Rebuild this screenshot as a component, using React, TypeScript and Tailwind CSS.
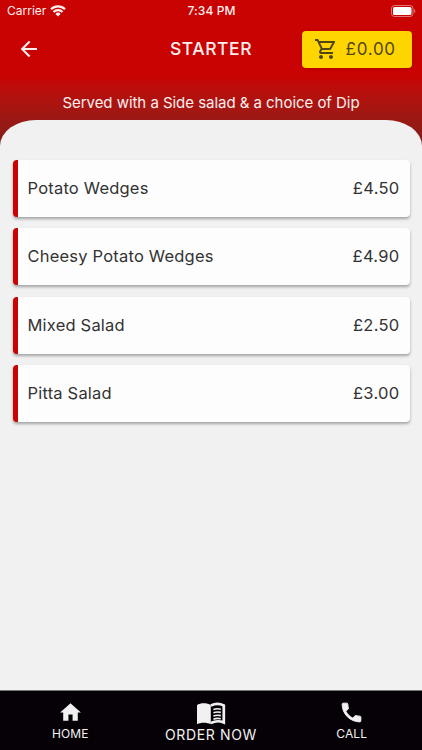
import React from 'react';
import { MdHome, MdOutlineShoppingCart } from 'react-icons/md';

const items = [
  { name: 'Potato Wedges', price: '£4.50' },
  { name: 'Cheesy Potato Wedges', price: '£4.90' },
  { name: 'Mixed Salad', price: '£2.50' },
  { name: 'Pitta Salad', price: '£3.00' },
];

function StatusBar() {
  return (
    <div className="h-5 grid grid-cols-3 items-center pt-0.5 pl-[7px] pr-1.5 text-xs">
      <div className="flex items-center gap-1">
        <span>Carrier</span>
        <svg width="16" height="12" viewBox="0 0 16 12" fill="none" stroke="currentColor" strokeWidth="2.2">
          <path d="M1 4.3a10 10 0 0 1 14 0" />
          <path d="M3.5 7.1a6.2 6.2 0 0 1 9 0" />
          <path d="M8 11.5 5.4 8.9a3.6 3.6 0 0 1 5.2 0Z" fill="currentColor" stroke="none" />
        </svg>
      </div>
      <span className="text-center font-medium tracking-[0.1px]">7:34 PM</span>
      <svg className="justify-self-end" width="25" height="12" viewBox="0 0 25 12">
        <rect x="0.5" y="0.5" width="21.5" height="11" rx="3" fill="none" stroke="#fff" strokeOpacity="0.45" />
        <rect x="2" y="2" width="18.5" height="8" rx="1.6" fill="#fff" />
        <path d="M23.2 4v4c1.5-.7 1.5-3.3 0-4Z" fill="#fff" fillOpacity="0.5" />
      </svg>
    </div>
  );
}

function BackIcon() {
  return (
    <svg className="ml-[9.5px]" width="18" height="18" viewBox="0 0 18 18" fill="none" stroke="currentColor" strokeWidth="2.1">
      <path d="M17 9H2.5M9.6 1.6 2.2 9l7.4 7.4" />
    </svg>
  );
}

function BookIcon() {
  return (
    <svg width="30" height="24" viewBox="0 0 30 24" fill="none" stroke="currentColor">
      <path d="M1 3C4.5.8 11 .8 14.8 3v19.2C11 20.2 4.5 20.2 1 22.2Z" fill="currentColor" stroke="none" />
      <path d="M14.9 3.4C18.5 1.8 24 1.6 27.8 3.5v17C24 18.9 18.5 19.2 14.9 21" strokeWidth="2.7" />
      <path d="M17.4 7.6c2.3-.9 5-1 7.4-.4M17.4 10.8c2.3-.9 5-1 7.4-.4M17.4 14c2.3-.9 5-1 7.4-.4M17.4 17.2c2.3-.9 5-1 7.4-.4" strokeWidth="1.6" />
    </svg>
  );
}

function PhoneIcon() {
  return (
    <svg width="25" height="25" viewBox="0 0 24 24" fill="currentColor" stroke="currentColor" strokeWidth="0.9">
      <path d="M6.62 10.79c1.44 2.83 3.76 5.14 6.59 6.59l2.2-2.2c.27-.27.67-.36 1.02-.24 1.12.37 2.33.57 3.57.57.55 0 1 .45 1 1V20c0 .55-.45 1-1 1-9.39 0-17-7.61-17-17 0-.55.45-1 1-1h3.5c.55 0 1 .45 1 1 0 1.25.2 2.45.57 3.57.11.35.03.74-.25 1.02l-2.2 2.2z" />
    </svg>
  );
}

export default function App() {
  return (
    <div className="h-[750px] w-[422px] flex flex-col overflow-hidden bg-[#f1f1f1] font-['Inter',sans-serif]">
      {/* Header */}
      <header className="h-[150px] shrink-0 bg-linear-to-b from-[#c90202] from-[50%] to-[#7d1c18] text-[#fff0ef]">
        <StatusBar />
        <div className="h-[58px] grid grid-cols-3 items-center px-[10.5px]">
          <BackIcon />
          <h1 className="text-center text-[17.5px] font-medium tracking-[0.55px]">STARTER</h1>
          <button className="justify-self-end w-[110px] h-[37px] rounded-[4px] bg-[#ffd500] text-[#514512] flex items-center pl-3 gap-2 shadow">
            <MdOutlineShoppingCart className="size-6" />
            <span className="pt-0.5 text-[17px] tracking-[0.75px]">£0.00</span>
          </button>
        </div>
        <p className="mt-[15px] text-center text-[15px] leading-5 tracking-[-0.04px]">Served with a Side salad &amp; a choice of Dip</p>
      </header>

      {/* Menu items */}
      <main className="-mt-[30px] flex-1 [border-radius:36px_36px_0_0/26px_26px_0_0] bg-[#f1f1f1] pt-10 px-[12.5px] flex flex-col gap-[11.3px]">
        {items.map((item) => (
          <div
            key={item.name}
            className="h-[57px] shrink-0 flex items-center justify-between rounded-[4px] border-l-[5.5px] border-[#c90202] bg-[#fdfdfd] px-[10px] text-[16.5px] text-[#333] shadow-[0_2px_3px_rgba(0,0,0,0.32)]"
          >
            <span className="tracking-[0.2px]">{item.name}</span>
            <span className="tracking-[0.3px]">{item.price}</span>
          </div>
        ))}
      </main>

      {/* Bottom navigation */}
      <nav className="h-[60px] shrink-0 grid grid-cols-3 bg-[#060106] border-t border-[#777] text-[#f1f1f1]">
        <a className="flex flex-col items-center pt-[9px]">
          <MdHome className="size-[25px]" />
          <span className="text-xs leading-4 mt-px tracking-[0.1px]">HOME</span>
        </a>
        <a className="flex flex-col items-center pt-[11px]">
          <BookIcon />
          <span className="text-sm leading-4 mt-px tracking-[0.65px]">ORDER NOW</span>
        </a>
        <a className="flex flex-col items-center pt-[9px]">
          <PhoneIcon />
          <span className="text-xs leading-4 mt-px tracking-[0.1px]">CALL</span>
        </a>
      </nav>
    </div>
  );
}
